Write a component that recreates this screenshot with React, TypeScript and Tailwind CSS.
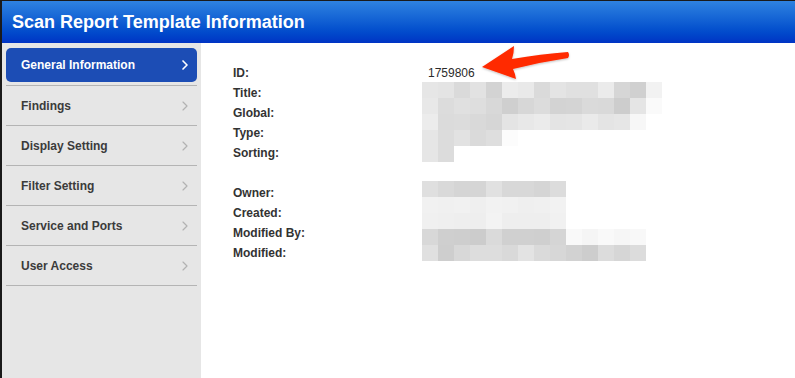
import { ChevronRight } from 'lucide-react'

const navItems = ['General Information', 'Findings', 'Display Setting', 'Filter Setting', 'Service and Ports', 'User Access']

const groups = [
  ['ID:', 'Title:', 'Global:', 'Type:', 'Sorting:'],
  ['Owner:', 'Created:', 'Modified By:', 'Modified:'],
]

// pixelated (redacted) values, one row per 16px band
const blurTop = [
  ['#e6e6e6', '#e4e4e4', '#dadada', '#e2e2e2', '#d3d3d3', '#ececec', '#e9e9e9', '#dadada', '#e4e4e4', '#e0e0e0', '#e0e0e0', '#ebebeb', '#d6d6d6', '#d0d0d0', '#f2f2f2'],
  ['#e8e8e8', '#dcdcdc', '#e0e0e0', '#dedede', '#d8d8d8', '#cfcfcf', '#d7d7d7', '#dcdcdc', '#d3d3d3', '#d4d4d4', '#dadada', '#d9d9d9', '#cdcdcd', '#e5e5e5', '#fafafa'],
  ['#ececec', '#dbdbdb', '#dcdcdc', '#d9d9d9', '#d6d6d6', '#e4e4e4', '#e8e8e8', '#ebebeb', '#e4e4e4', '#e5e5e5', '#eaeaea', '#e4e4e4', '#e6e6e6', '#f7f7f7', '#ffffff'],
  ['#e6e6e6', '#dcdcdc', '#e2e2e2', '#dadada', '#dedede', '#fcfcfc'],
  ['#e6e6e6', '#dcdcdc'],
]

const blurBottom = [
  ['#dfdfdf', '#d9d9d9', '#d5d5d5', '#d5d5d5', '#e1e1e1', '#d8d8d8', '#d8d8d8', '#d5d5d5', '#dcdcdc'],
  ['#f1f1f1', '#f0f0f0', '#f1f1f1', '#efefef', '#f2f2f2', '#f1f1f1', '#efefef', '#f0f0f0', '#f2f2f2'],
  ['#f0f0f0', '#efefef', '#eeeeee', '#eeeeee', '#f3f3f3', '#eeeeee', '#eeeeee', '#eeeeee', '#f1f1f1'],
  ['#d8d8d8', '#cfcfcf', '#cecece', '#cccccc', '#dadada', '#d0d0d0', '#d0d0d0', '#cfcfcf', '#d5d5d5', '#f9f9f9', '#f5f5f5', '#f9f9f9', '#f6f6f6', '#f8f8f8'],
  ['#e0e0e0', '#cecece', '#d8d8d8', '#dddddd', '#dddddd', '#d9d9d9', '#e3e3e3', '#dadada', '#d7d7d7', '#d2d2d2', '#cdcdcd', '#dcdcdc', '#d6d6d6', '#dcdcdc'],
]

function Blur({ rows }: { rows: string[][] }) {
  return (
    <div className="flex flex-col">
      {rows.map((row, i) => (
        <div key={i} className="flex h-4">
          {row.map((c, j) => (
            <div key={j} className="w-4 h-4" style={{ backgroundColor: c }} />
          ))}
        </div>
      ))}
    </div>
  )
}

export default function App() {
  return (
    <div
      className="w-[795px] h-[378px] overflow-hidden flex flex-col bg-white border-l-2 border-t border-[#1a1a1a]"
      style={{ fontFamily: '"Liberation Sans", Arial, sans-serif' }}
    >
      {/* 상단 헤더 */}
      <div className="h-[42px] shrink-0 flex items-center pl-[10px] bg-gradient-to-b from-[#2f82e0] to-[#0033c4]">
        <h1 className="text-[18px] font-bold text-white">Scan Report Template Information</h1>
      </div>

      <div className="flex flex-1">
        {/* 사이드바 */}
        <nav className="w-[199px] shrink-0 bg-[#e6e6e6] pt-[5px] px-[4px]">
          {navItems.map((label, i) => {
            const active = i === 0
            if (active) {
              return (
                <div key={label} className="h-[38px] border-b border-[#b4b4b4]">
                  <div className="h-[34px] flex items-center justify-between pl-[15px] pr-[4px] rounded-[5px] bg-[#1c4db5]">
                    <span className="text-[12px] font-bold text-white">{label}</span>
                    <ChevronRight size={16} strokeWidth={2.5} className="text-white" />
                  </div>
                </div>
              )
            }
            return (
              <div key={label} className="h-[40px] flex items-center justify-between pl-[15px] pr-[4px] border-b border-[#b4b4b4]">
                <span className="text-[12px] font-bold text-[#3b3b3b]">{label}</span>
                <ChevronRight size={16} strokeWidth={1.75} className="text-[#b2b2b2]" />
              </div>
            )
          })}
        </nav>

        {/* 본문 */}
        <main className="relative flex-1 pl-[32px] pt-[20px]">
          {groups.map((group, gi) => (
            <div key={gi} className={`flex ${gi === 1 ? 'mt-[20px]' : ''}`}>
              <div className="w-[189px] flex flex-col">
                {group.map((label) => (
                  <div key={label} className="h-[20px] flex items-center text-[12px] font-bold text-[#333333]">
                    {label}
                  </div>
                ))}
              </div>
              <div>
                {gi === 0 ? (
                  <>
                    <div className="h-[19px] flex items-center pl-[6px] text-[12px] text-[#2b2b2b]">1759806</div>
                    <Blur rows={blurTop} />
                  </>
                ) : (
                  <div className="-mt-[2px]">
                    <Blur rows={blurBottom} />
                  </div>
                )}
              </div>
            </div>
          ))}

          {/* 빨간 화살표 */}
          <svg className="absolute left-[279px] top-[0px]" width="92" height="40" viewBox="479 44 92 40">
            <defs>
              <filter id="sh" x="-20%" y="-20%" width="140%" height="140%">
                <feDropShadow dx="0" dy="1" stdDeviation="1" floodColor="#000" floodOpacity="0.25" />
              </filter>
            </defs>
            <path
              d="M481 68 L513 47 Q513 54 511 60 Q540 55 567 53 Q569 56 567 59 Q540 63 512 70 Q514 74 515 80 Z"
              fill="#ff2a00"
              filter="url(#sh)"
            />
          </svg>
        </main>
      </div>
    </div>
  )
}
